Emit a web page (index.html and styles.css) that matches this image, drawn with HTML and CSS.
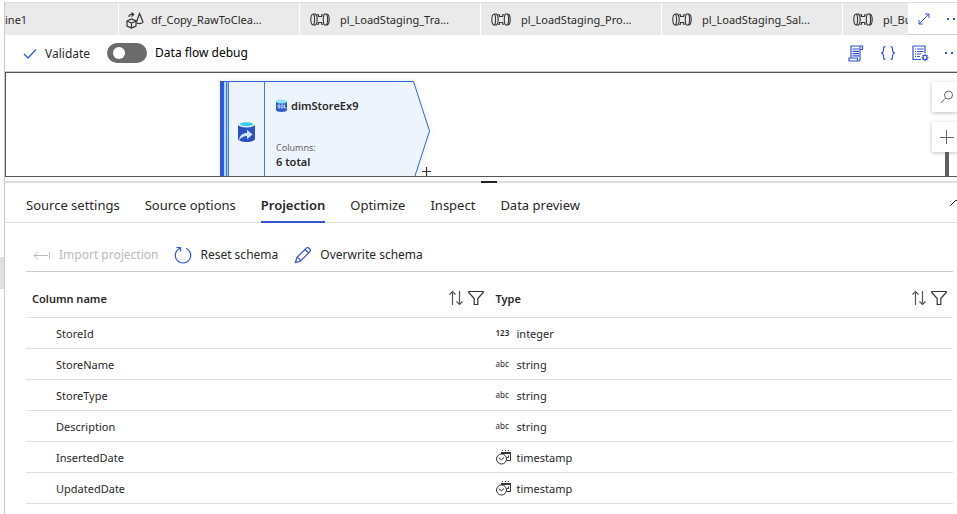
FILE: index.html
```html
<!DOCTYPE html>
<html lang="en">
<head>
<meta charset="utf-8">
<title>Data flow editor</title>
<link rel="stylesheet" href="styles.css">
</head>
<body>
<svg class="defs" aria-hidden="true">
  <symbol id="pipeline" viewBox="0 0 20 16">
    <g fill="none" stroke="#333" stroke-width="1.1">
      <path d="M3.500 2C1.500 2 .8 4.500.8 7.500S1.500 13 3.500 13M3.500 2C5 4 5 11 3.500 13M3.500 2H5.500C7.800 4 7.800 11 5.500 13H3.500"/>
      <path d="M6.800 2.800H8.500V4.500h3.200V2.800h1.700M6.800 12.200H8.500V10.500h3.200v1.700h1.700"/>
      <path d="M16.500 2c2 0 2.700 2.500 2.700 5.500S18.500 13 16.500 13M16.500 2C18 4 18 11 16.500 13M16.500 2H14.500C12.800 4 12.800 11 14.500 13h2"/>
    </g>
  </symbol>
  <symbol id="sort" viewBox="0 0 16 16">
    <path d="M4.500 15V1.500M1.500 4.500l3-3 3 3M11.500 1v13.500M8.500 11.500l3 3 3-3" fill="none" stroke="#555" stroke-width="1.2"/>
  </symbol>
  <symbol id="filter" viewBox="0 0 16 16">
    <path d="M.8 1.500h14.400v1L9.800 8.500v6H6.200v-6L.8 2.500z" fill="none" stroke="#333" stroke-width="1.200"/>
  </symbol>
  <symbol id="timestamp" viewBox="0 0 15 15">
    <g fill="none" stroke="#333">
      <path d="M5.500 5V2.500h9v8H10.500"/>
      <path d="M5 3h10" stroke-width="2"/>
      <path d="M6.500 0v1M9.500 0v1M12.500 0v1M10.500 7.500h2v-2"/>
      <circle cx="5.500" cy="9" r="5" fill="#fff"/>
      <path d="M2.800 7.800L5.500 9.800 8 7.500"/>
    </g>
  </symbol>
</svg>
<div class="shell">
  <aside class="rail"><div class="rail-handle"></div></aside>
  <main class="main">
    <header class="tabbar">
      <nav class="tabs">
        <a class="tab tab-first" href="#">ine1</a>
        <a class="tab tab-flow" href="#">
          <svg width="18" height="17" viewBox="0 0 18 17" fill="none" stroke="#333" stroke-width="1.200"><path d="M1 9l4.500-2L10 9v5l-4.500 2L1 14zM1 9l4.500 2L10 9M5.500 11v5"/><path d="M3 5c0-2 1.500-3 4-2.500M5.500.5l2.200 2-2.200 2.200"/><path d="M10.500 10l3-8.500L17 10c-1 1.600-3.500 2-6.500 1.200"/></svg>
          df_Copy_RawToClea...</a>
        <a class="tab" href="#"><svg width="20" height="16"><use href="#pipeline"/></svg>pl_LoadStaging_Tra...</a>
        <a class="tab" href="#"><svg width="20" height="16"><use href="#pipeline"/></svg>pl_LoadStaging_Pro...</a>
        <a class="tab" href="#"><svg width="20" height="16"><use href="#pipeline"/></svg>pl_LoadStaging_Sal...</a>
        <a class="tab" href="#"><svg width="20" height="16"><use href="#pipeline"/></svg>pl_Bu</a>
      </nav>
      <div class="tab-tools">
        <button class="icon-btn" aria-label="Expand"><svg width="12" height="12" viewBox="0 0 12 12" fill="none" stroke="#3355d0"><path d="M1 11L11 1M7 1h4v4M1 7v4h4"/></svg></button>
        <button class="icon-btn" aria-label="More tabs"><svg width="14" height="4" viewBox="0 0 14 4" fill="#3355d0"><path d="M0 1h2v2H0zM6 1h2v2H6zM12 1h2v2h-2z"/></svg></button>
      </div>
    </header>

    <div class="toolbar">
      <button class="validate"><svg width="14" height="12" viewBox="0 0 14 12" fill="none" stroke="#3355d0" stroke-width="1.300"><path d="M1 6l4 4 8-8.500"/></svg>Validate</button>
      <label class="debug"><input type="checkbox" role="switch" class="switch">Data flow debug</label>
      <div class="toolbar-tools">
        <button class="icon-btn" aria-label="Script"><svg width="16" height="17" viewBox="0 0 16 17" fill="none" stroke="#3355d0" stroke-width="1.200"><path d="M3 13V1h11.500v3.500H12V14.500c0 1-.5 1.500-1.300 1.500H1v-3h8.500v2.500M12 4.500V1M4.500 4H11M4.500 6.300H11M4.500 8.600H11M4.500 10.900H11"/></svg></button>
        <button class="icon-btn" aria-label="Code"><svg width="16" height="16" viewBox="0 0 16 16" fill="none" stroke="#3355d0" stroke-width="1.200"><path d="M5.500 1.500C3.500 1.500 3.500 2.500 3.500 4S3.500 8 1 8c2.500 0 2.500 2.500 2.500 4s0 2.500 2 2.500M10.500 1.500c2 0 2 1 2 2.500S12.500 8 15 8c-2.500 0-2.500 2.500-2.500 4s0 2.500-2 2.500"/></svg></button>
        <button class="icon-btn" aria-label="Properties"><svg width="17" height="17" viewBox="0 0 17 17" fill="none" stroke="#3355d0" stroke-width="1.200"><path d="M9 14.500H1V1h12v7M3 4h1M5 4h6.500M3 6.500h1M5 6.500h6.500M3 9h1M5 9h4M3 11.500h1M5 11.500h3"/><circle cx="13" cy="12.500" r="2"/><path d="M13 9v1.500M13 14.500V16M9.500 12.500H11M15 12.500h1.500M10.500 10l1.100 1.100M14.400 13.900l1.100 1.100M15.500 10l-1.100 1.100M11.600 13.900L10.500 15"/></svg></button>
        <button class="icon-btn" aria-label="More"><svg width="14" height="4" viewBox="0 0 14 4" fill="#3355d0"><path d="M0 1h2v2H0zM6 1h2v2H6zM12 1h2v2h-2z"/></svg></button>
      </div>
    </div>

    <section class="canvas" aria-label="Data flow canvas">
      <div class="node">
        <svg class="node-shape" width="216" height="104" viewBox="0 0 216 104">
          <path d="M0 .5h193.500L209.500 50l-16 49.500H0z" fill="#eef4fd" stroke="#2f66d5"/>
          <path d="M0 0h4v104H0z" fill="#3057d8"/>
          <path d="M4.500 1v103M5.500 1v103" stroke="#b9d4f5"/>
          <path d="M6.500 0v104M8.500 0v104M44.500 0v104" stroke="#3f7cdf" fill="none"/>
          <path d="M7.500 1v103" stroke="#a5c9f4"/>
          <path d="M206.500 86v9M202 90.500h9" stroke="#333" stroke-width="1.200"/>
          <path d="M18 43.500v14.500c0 1.500 3.500 3 8.500 3s8.500-1.500 8.500-3V43.500z" fill="#2b50c0"/>
          <ellipse cx="26.500" cy="43.500" rx="8.500" ry="3" fill="#e6f2fb"/>
          <ellipse cx="26.500" cy="43.200" rx="6.500" ry="2" fill="#35cdf0"/>
          <path d="M19 59.500c.3-5.500 4-7.500 8-7.500v-3.200l5.500 4.700-5.500 4.700V55c-3.500 0-6 1.500-8 4.500z" fill="#cfe4fb"/>
          <path d="M56 20.500v8.500c0 1 2.500 2 5.500 2s5.500-1 5.500-2v-8.500z" fill="#2b5bc8"/>
          <ellipse cx="61.500" cy="20.500" rx="5.500" ry="2" fill="#8be4f8"/>
          <path d="M60 24h-2v1.500h1.500V27h-2M61 24h2v3h-2zM64.500 23.500V27h2" fill="none" stroke="#e6f2fb" stroke-width=".8"/>
        </svg>
        <div class="node-body">
          <strong class="node-title">dimStoreEx9</strong>
          <span class="node-label">Columns:</span>
          <strong class="node-count">6 total</strong>
        </div>
      </div>
      <div class="canvas-tools">
        <button aria-label="Search"><svg width="14" height="14" viewBox="0 0 14 14" fill="none" stroke="#666"><circle cx="8.500" cy="5" r="4"/><path d="M5.600 8L1 12.800"/></svg></button>
        <button aria-label="Zoom in"><svg width="14" height="14" viewBox="0 0 14 14" stroke="#666"><path d="M0 7.500h14M6.500 0v14"/></svg></button>
        <span class="zoom-track"></span>
      </div>
    </section>

    <div class="splitter"><span class="grip"></span></div>

    <nav class="panel-tabs">
      <a href="#">Source settings</a>
      <a href="#">Source options</a>
      <a href="#" class="active" aria-current="page">Projection</a>
      <a href="#">Optimize</a>
      <a href="#">Inspect</a>
      <a href="#">Data preview</a>
      <button class="collapse icon-btn" aria-label="Collapse"><svg width="14" height="8" viewBox="0 0 14 8" fill="none" stroke="#333"><path d="M1 7l6-6 6 6"/></svg></button>
    </nav>

    <section class="panel">
      <div class="actions">
        <button disabled><svg width="18" height="18" viewBox="0 0 18 18" fill="none" stroke="#bbb"><path d="M1 9.500h14M5 5.500l-4 4 4 4M16.500 6v7"/></svg>Import projection</button>
        <button><svg width="18" height="18" viewBox="0 0 18 18" fill="none" stroke="#3355d0" stroke-width="1.200"><path d="M6 2.200a7.700 7.700 0 1 0 6 0M2.500 1.500H6.500v4"/></svg>Reset schema</button>
        <button><svg width="18" height="18" viewBox="0 0 18 18" fill="none" stroke="#3355d0" stroke-width="1.200"><path d="M1.500 16.500l1.300-5L12.500 2c1.500-1.500 5 1.500 3.500 3.500L6.500 15zM2.800 11.500c1.700.2 3.300 1.600 3.700 3.500M11 3.500L14.500 7"/></svg>Overwrite schema</button>
      </div>
      <table class="schema">
        <thead>
          <tr>
            <th scope="col"><div class="head"><span>Column name</span><span class="head-tools"><button class="icon-btn" aria-label="Sort by column name"><svg width="16" height="16"><use href="#sort"/></svg></button><button class="icon-btn" aria-label="Filter column name"><svg width="16" height="16"><use href="#filter"/></svg></button></span></div></th>
            <th scope="col"><div class="head"><span>Type</span><span class="head-tools"><button class="icon-btn" aria-label="Sort by type"><svg width="16" height="16"><use href="#sort"/></svg></button><button class="icon-btn" aria-label="Filter type"><svg width="16" height="16"><use href="#filter"/></svg></button></span></div></th>
          </tr>
        </thead>
        <tbody>
          <tr><td>StoreId</td><td><div class="type"><span class="kind number">123</span>integer</div></td></tr>
          <tr><td>StoreName</td><td><div class="type"><span class="kind">abc</span>string</div></td></tr>
          <tr><td>StoreType</td><td><div class="type"><span class="kind">abc</span>string</div></td></tr>
          <tr><td>Description</td><td><div class="type"><span class="kind">abc</span>string</div></td></tr>
          <tr><td>InsertedDate</td><td><div class="type"><svg width="15" height="15"><use href="#timestamp"/></svg>timestamp</div></td></tr>
          <tr><td>UpdatedDate</td><td><div class="type"><svg width="15" height="15"><use href="#timestamp"/></svg>timestamp</div></td></tr>
        </tbody>
      </table>
    </section>
  </main>
</div>
</body>
</html>
```
FILE: styles.css
```css
* { box-sizing: border-box; }
body {
  margin: 0;
  overflow: hidden;
  background: #fff;
  color: #292827;
  font: 13px/20px "Noto Sans", "Open Sans", sans-serif;
}
a { color: inherit; text-decoration: none; }
button { border: 0; padding: 0; background: none; color: inherit; font: inherit; }
svg { display: block; flex: none; }
.defs { position: absolute; width: 0; height: 0; }
.icon-btn { display: flex; align-items: center; justify-content: center; flex: none; }

.shell { display: flex; min-height: 100vh; padding-top: 2px; }
.rail { flex: none; width: 5px; border-right: 1px solid #ccc; }
.rail-handle { height: 32px; margin-top: 255px; background: #e1dfdd; }
.main { flex: 1; min-width: 0; }

/* document tabs */
.tabbar { display: flex; border-top: 1px solid #ddd; }
.tabs { display: flex; flex: 1; min-width: 0; overflow: hidden; background: #eaeaea; }
.tab {
  display: flex;
  align-items: center;
  flex: none;
  gap: 10px;
  width: 181px;
  height: 32px;
  padding: 2px 0 0 10px;
  border-right: 1px solid #fff;
  font-size: 11px;
  white-space: nowrap;
}
.tab-first { width: 114px; padding-left: 0; }
.tab-flow { gap: 7px; padding-left: 7px; }
.tab-tools { display: flex; align-items: center; gap: 17px; width: 49px; padding-left: 10px; border-bottom: 1px solid #ccc; overflow: hidden; }

/* toolbar */
.toolbar { display: flex; align-items: center; height: 37px; border-bottom: 1px solid #ccc; overflow: hidden; }
.validate { display: flex; align-items: center; gap: 8px; margin-left: 18px; padding-top: 2px; font-size: 12px; }
.debug { display: flex; align-items: center; gap: 8px; margin-left: 17px; font-size: 12px; color: #000; }
.switch { appearance: none; width: 40px; height: 20px; margin: 0; padding: 4px; border-radius: 10px; background: #6b6b6b; }
.switch::before { content: ""; display: block; width: 12px; height: 12px; margin-left: 2px; border-radius: 50%; background: #fff; }
.toolbar-tools { display: flex; align-items: center; gap: 16px; width: 109px; margin-left: auto; overflow: hidden; }

/* canvas */
.canvas { position: relative; height: 105px; border: 1px solid #555; border-right: 0; overflow: hidden; }
.node { position: absolute; left: 214px; top: 8px; }
.node-shape { filter: drop-shadow(0 1px 3px rgba(0, 0, 0, .1)); }
.node-body { position: absolute; left: 56px; top: 15px; display: flex; flex-direction: column; white-space: nowrap; }
.node-title { padding-left: 15px; font-size: 11px; font-weight: 600; }
.node-label { margin-top: 25px; font-size: 9px; line-height: 14px; color: #666; }
.node-count { font-size: 11px; font-weight: 600; line-height: 14px; }
.canvas-tools { position: absolute; right: 0; top: 9px; display: flex; flex-direction: column; gap: 10px; width: 25px; }
.canvas-tools button { display: flex; align-items: center; height: 30px; padding-left: 8px; background: #fff; box-shadow: 0 1px 4px rgba(0, 0, 0, .25); overflow: hidden; }
.zoom-track { width: 4px; height: 30px; margin: -10px 0 0 13px; background: #605e5c; }

.splitter { display: flex; justify-content: center; height: 2px; margin-top: 4px; padding-left: 16px; background: #e1dfdd; }
.grip { width: 16px; background: #222; }

/* panel tabs */
.panel-tabs { display: flex; gap: 25px; height: 40px; padding-left: 21px; border-bottom: 1px solid #e1dfdd; white-space: nowrap; }
.panel-tabs a { height: 40px; padding-top: 12px; }
.panel-tabs .active { border-bottom: 2px solid #3355d0; font-weight: 600; }
.panel-tabs .collapse { width: 8px; margin-left: auto; justify-content: flex-start; overflow: hidden; }

/* projection panel */
.panel { padding: 0 4px 0 21px; }
.actions { display: flex; gap: 16px; height: 49px; padding: 14px 0 0 7px; border-bottom: 1px solid #ccc; font-size: 12px; }
.actions button { display: flex; align-items: center; gap: 8px; height: 36px; }
.actions button:disabled { color: #bbb; }
.schema { width: 100%; table-layout: fixed; border-collapse: collapse; font-size: 11px; }
.schema th, .schema td { height: 31px; padding: 1px 0 0 6px; border-bottom: 1px solid #e1dfdd; text-align: left; }
.schema th { height: 45px; font-weight: 600; }
.schema td { padding-top: 2px; }
.schema td:first-child { padding-left: 30px; }
.head { display: flex; align-items: center; justify-content: space-between; height: 43px; padding-top: 9px; }
.head-tools { display: flex; gap: 4px; padding: 0 6px 3px 0; }
.type { display: flex; align-items: center; gap: 6px; }
.kind { width: 15px; font-size: 8px; line-height: 14px; padding-bottom: 2px; }
.number { font-weight: 600; }
```
